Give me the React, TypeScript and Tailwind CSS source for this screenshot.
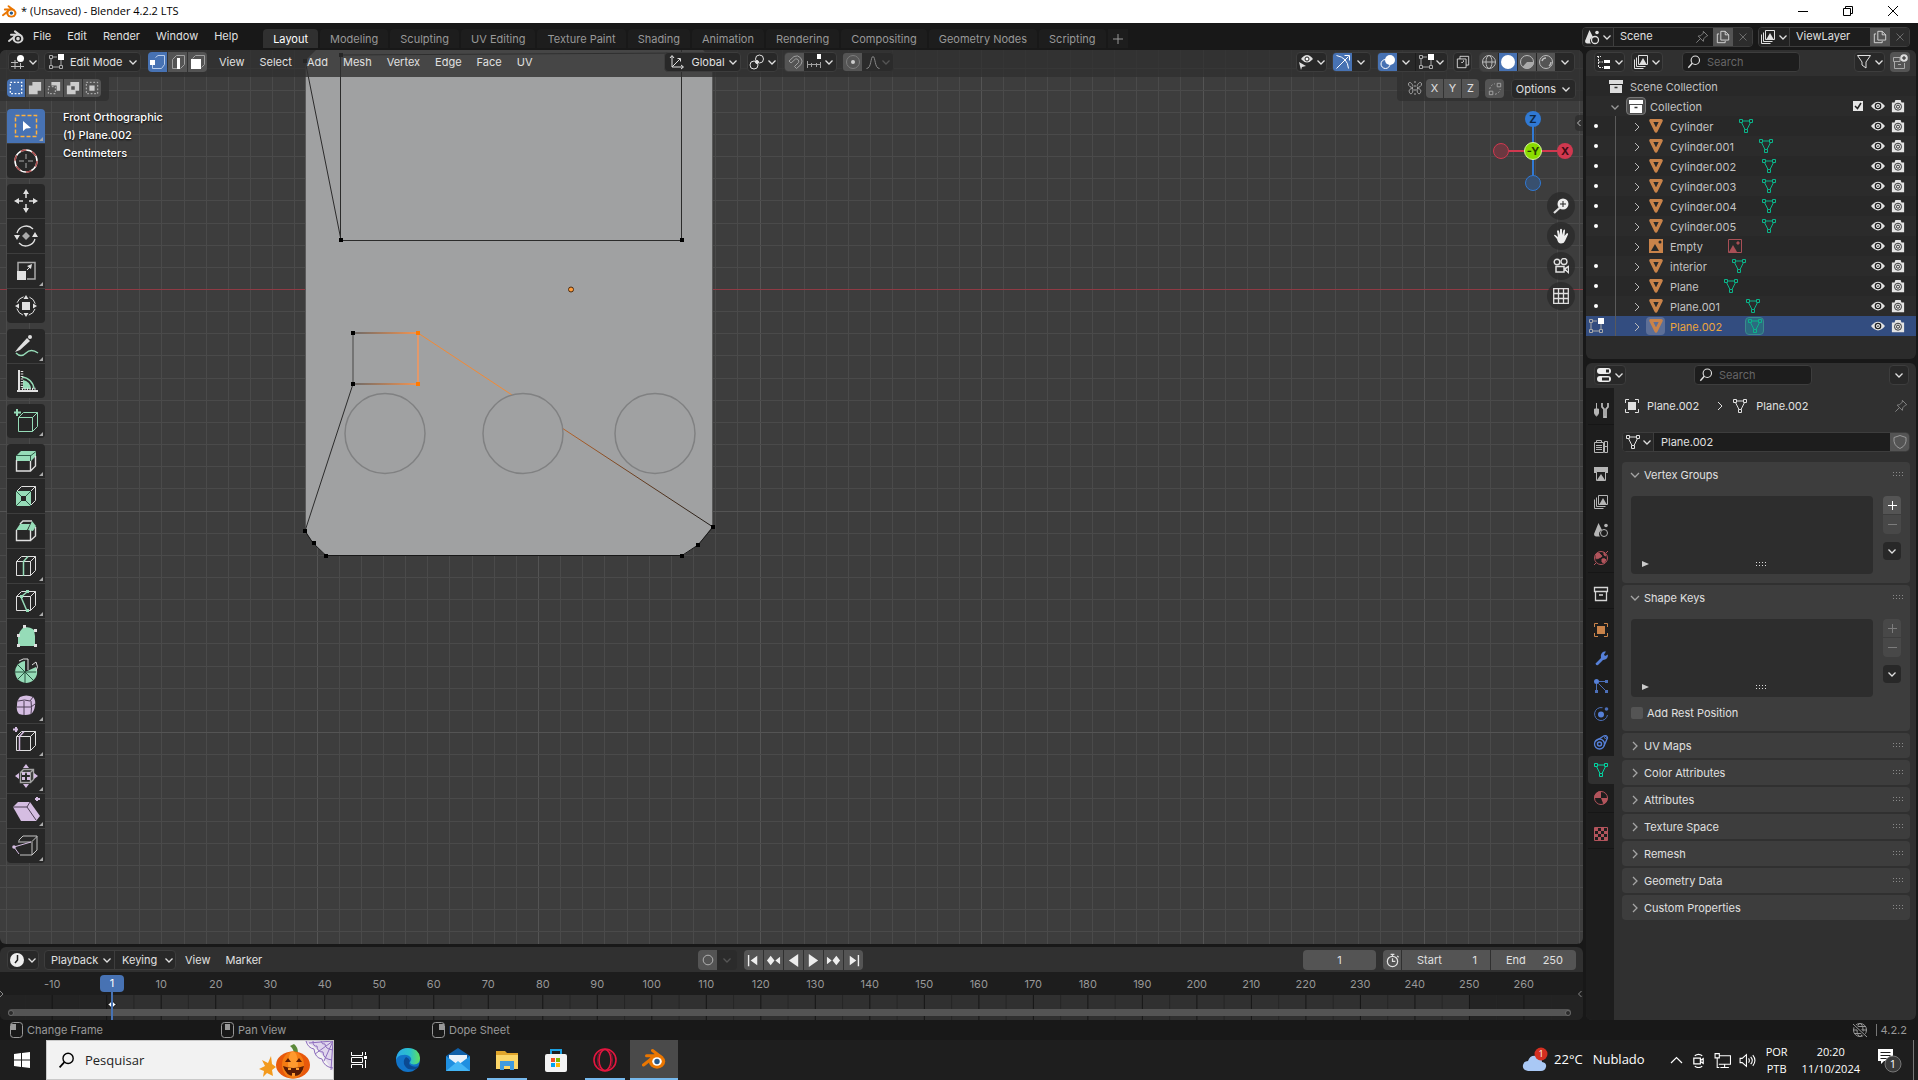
import { Fragment, ReactNode, useState } from 'react';

interface IconProps {
  children: ReactNode;
  size?: number;
  box?: number;
  className?: string;
}

function Svg({ children, size = 16, box = 16, className = '' }: IconProps) {
  return (
    <svg
      width={size}
      height={size}
      viewBox={`0 0 ${box} ${box}`}
      fill="none"
      stroke="currentColor"
      className={`shrink-0 ${className}`}
      aria-hidden="true"
    >
      {children}
    </svg>
  );
}

/* ---------- shared icons ---------- */

const Chevron = ({ className = '' }: { className?: string }) => (
  <Svg size={10} box={10} className={className}>
    <path d="M1.500 3.500 5 7l3.500-3.500" strokeWidth="1.300" />
  </Svg>
);

const BlenderLogo = ({ size = 16, ring = '#ea7600', hole = '#fff', dot = '#265787' }) => (
  <Svg size={size} box={24}>
    <path d="M1.500 18 11 10.500M4.500 8.800h10M10.500 3.500 19 10" stroke={ring} strokeWidth="3" strokeLinecap="round" />
    <ellipse cx="15" cy="14.500" rx="8.200" ry="7.200" fill={ring} stroke="none" />
    <ellipse cx="15" cy="14.500" rx="4.800" ry="4.200" fill={hole} stroke="none" />
    <circle cx="15" cy="14.500" r="2.700" fill={dot} stroke="none" />
  </Svg>
);

const MeshData = ({ className = '', size = 16 }: { className?: string; size?: number }) => (
  <Svg size={size} className={className}>
    <path d="M1.500 1.500h3v3h-3zM11.500 1.500h3v3h-3zM6.500 11.500h3v3h-3zM4.500 3h7M3.500 4.500l3.500 7M12.500 4.500 9 11.500" />
  </Svg>
);

const MeshObject = ({ className = '' }: { className?: string }) => (
  <Svg className={className}>
    <path d="M2.800 2.500h10.400L8 13z" strokeWidth="3.200" strokeLinejoin="round" />
  </Svg>
);

const Magnifier = ({ size = 14 }: { size?: number }) => (
  <Svg size={size}>
    <circle cx="9.500" cy="6" r="4.800" strokeWidth="1.300" />
    <path d="M6 9.500 1.500 14.500" strokeWidth="1.600" />
  </Svg>
);

const ArchiveBox = ({ className = '' }: { className?: string }) => (
  <Svg className={className}>
    <path d="M1 2h14v4H1zM2 7h12v8H2z" fill="currentColor" stroke="none" />
    <path d="M6.500 9.500h3" stroke="#333" strokeWidth="1.600" />
  </Svg>
);

const ImageStack = ({ className = '' }: { className?: string }) => (
  <Svg className={className}>
    <path d="M5.500 1.500h9v9h-9zM3.500 3.500v9h9M1.500 5.500v9h9" />
    <path d="M6.500 10 10 4l3.500 6z" fill="currentColor" stroke="none" />
  </Svg>
);

const SceneIcon = ({ className = '' }: { className?: string }) => (
  <Svg className={className}>
    <path d="M5.500 1 9 8a4 4 0 0 0-2 6.500H3A2.500 2.500 0 0 1 1 12z" fill="currentColor" stroke="none" />
    <circle cx="11" cy="11" r="3.500" strokeWidth="1.300" />
    <circle cx="13" cy="3.500" r="1.800" fill="currentColor" stroke="none" />
  </Svg>
);

const Pin = () => (
  <Svg size={14} className="text-[#8a8a8a]">
    <path d="m9.500 1.500 5 5-1.500.5-3 3-.5 3-6-6 3-.5 3-3zM6 10l-4.500 4.500" />
  </Svg>
);

const EditVerts = ({ className = '' }: { className?: string }) => (
  <Svg className={className}>
    <path d="M1.500 1.500h3v3h-3zM1.500 11.500h3v3h-3zM11.500 11.500h3v3h-3zM3 4.500v7M4.500 13h7M13 6v5.500M4.500 3H9" stroke="#a9a9a9" />
    <path d="M10 0h6v6h-6z" fill="#fff" stroke="none" />
  </Svg>
);

const Copy = () => (
  <Svg size={14}>
    <path d="M5.500 1.500h5l4 4v6h-9zM10.500 1.500v4h4M3.500 4.500h-2v10h9v-2" />
  </Svg>
);

const Cross = () => (
  <Svg size={10} box={10} className="text-[#6b6b6b]">
    <path d="m1.500 1.500 7 7M8.500 1.500l-7 7" />
  </Svg>
);

const Eye = () => (
  <Svg size={14}>
    <path d="M0 8q8-10 16 0-8 10-16 0z" fill="#e3e3e3" stroke="none" />
    <circle cx="8" cy="8" r="3" fill="#fff" stroke="#222" strokeWidth="1.600" />
    <circle cx="8" cy="8" r="1" fill="#222" stroke="none" />
  </Svg>
);

const Camera = () => (
  <Svg size={14}>
    <path d="M1 4h3l1-3h6l1 3h3v11H1z" fill="#e3e3e3" stroke="none" />
    <circle cx="8" cy="8.800" r="4" stroke="#222" />
    <circle cx="8" cy="8.800" r="1.800" stroke="#222" />
  </Svg>
);

const Grip = ({ className = '' }: { className?: string }) => (
  <svg width="11" height="5" className={`shrink-0 ${className}`} aria-hidden="true">
    <path d="M0 .5h11M0 3.500h11" stroke="currentColor" strokeDasharray="1 2" />
  </svg>
);

/* ---------- title + menu bar ---------- */

function TitleBar() {
  return (
    <div className="flex h-[23px] items-center bg-white pr-[3px] pl-0.5 font-['Open_Sans',sans-serif] text-[11px] text-black">
      <BlenderLogo size={15} />
      <span className="ml-1">* (Unsaved) - Blender 4.2.2 LTS</span>
      <div className="ml-auto flex h-[21px] self-start text-black">
        <button aria-label="Minimize" className="flex w-[45px] items-center justify-center">
          <Svg size={10} box={10}><path d="M0 5.500h10" /></Svg>
        </button>
        <button aria-label="Restore" className="flex w-[45px] items-center justify-center">
          <Svg size={10} box={10}><path d="M.5 2.500h7v7h-7zM2.500 2.500v-2h7v7h-2" /></Svg>
        </button>
        <button aria-label="Close" className="flex w-[45px] items-center justify-center">
          <Svg size={10} box={10}><path d="m0 0 10 10M10 0 0 10" /></Svg>
        </button>
      </div>
    </div>
  );
}

const workspaces = [
  'Layout', 'Modeling', 'Sculpting', 'UV Editing', 'Texture Paint', 'Shading',
  'Animation', 'Rendering', 'Compositing', 'Geometry Nodes', 'Scripting',
];

function IdField({ name, icon, pin, width }: { name: string; icon: ReactNode; pin?: boolean; width: string }) {
  return (
    <div className={`flex h-5 items-stretch overflow-hidden rounded border border-[#3d3d3d] bg-[#1d1d1d] ${width}`}>
      <button aria-label={`Browse ${name}`} className="flex w-[31px] shrink-0 items-center justify-center gap-0.5 border-r border-[#3d3d3d] bg-[#222]">
        {icon}
        <Chevron />
      </button>
      <input aria-label={name} defaultValue={name} className="w-0 min-w-0 flex-1 bg-transparent pl-1.5 outline-none" />
      {pin && <span className="mr-1 flex items-center"><Pin /></span>}
      <button aria-label={`New ${name}`} className="flex w-5 items-center justify-center bg-[#545454]"><Copy /></button>
      <button aria-label={`Remove ${name}`} className="flex w-[19px] items-center justify-center bg-[#2c2c2c]"><Cross /></button>
    </div>
  );
}

function MenuBar() {
  const [active, setActive] = useState('Layout');
  return (
    <div className="flex h-[27px] items-center bg-[#181818] pl-2">
      <BlenderLogo ring="#d5d5d5" hole="#181818" dot="#d5d5d5" />
      <nav className="ml-[9px] flex gap-4">
        {['File', 'Edit', 'Render', 'Window', 'Help'].map((m) => (
          <button key={m}>{m}</button>
        ))}
      </nav>
      <div className="ml-[25px] flex gap-0.5 self-start pt-1.5">
        {workspaces.map((w) => (
          <button
            key={w}
            onClick={() => setActive(w)}
            className={
              w === active
                ? 'h-[19px] rounded-t bg-[#303030] px-2.5 pt-0.5 text-white'
                : 'h-[19px] rounded-t bg-[#1d1d1d] px-2.5 pt-0.5 text-[#989898]'
            }
          >
            {w}
          </button>
        ))}
        <button aria-label="Add workspace" className="flex h-[19px] w-5 items-center justify-center bg-[#1d1d1d] text-[#989898]">
          <Svg size={10} box={10}><path d="M5 0v10M0 5h10" /></Svg>
        </button>
      </div>
      <div className="mr-2 ml-auto flex gap-[5px]">
        <IdField name="Scene" icon={<SceneIcon />} pin width="w-[171px]" />
        <IdField name="ViewLayer" icon={<ImageStack />} width="w-[152px]" />
      </div>
    </div>
  );
}

/* ---------- 3D viewport ---------- */

const columns = Array.from({ length: 180 }, (_, i) => i);

function Canvas() {
  const origin = 95;
  const step = 22.15;
  return (
    <svg className="absolute inset-0 h-full w-full bg-[#3d3d3d]" aria-label="Mesh in front orthographic view">
      <defs>
        <linearGradient id="edgeFade" x1="0" x2="1">
          <stop offset="0" stopColor="#6c6a69" />
          <stop offset="1" stopColor="#f49552" />
        </linearGradient>
        <linearGradient id="longEdge" x1="0" x2="1">
          <stop offset="0" stopColor="#b8642a" />
          <stop offset="1" stopColor="#1c1a18" />
        </linearGradient>
      </defs>
      {columns.map((i) => {
        const x = Math.round(origin + (i - 4) * step) + 0.5;
        return <path key={i} d={`M${x} 0V3000`} stroke={(i - 4) % 10 === 0 ? '#545454' : '#4a4a4a'} />;
      })}
      {columns.map((i) => {
        const y = Math.round(239 + (i - 10) * step) + 0.5;
        return <path key={i} d={`M0 ${y}H4000`} stroke={(i - 10) % 10 === 0 ? '#545454' : '#4a4a4a'} />;
      })}
      <path d="M0 239.500H4000" stroke="#8f3a44" />

      <path d="M316 0H703L712 10V477L698 495 682 506H326L313 493 306 482V10z" fill="#a0a1a2" />
      <path d="M712.500 12V477M305.500 12V482" stroke="#5a5a5a" />
      <path d="M305 481 313 493 326 505.500H682L698 495 713 477" stroke="#181818" fill="none" />
      <path d="M341 5 682 3M340.500 5V190.500H681.500V0M305 10 341 190M353 334 305 481" stroke="#2b2b2b" fill="none" />
      <path d="M353 283V334" stroke="#747474" strokeWidth="2" />
      <path d="M353 282h65v2h-65zM353 333h65v2h-65z" fill="url(#edgeFade)" />
      <path d="M418 283V334" stroke="#e2996c" strokeWidth="2" />
      <path d="m418 283 94 62" stroke="#f28a35" />
      <path d="m562 378 151 99" stroke="url(#longEdge)" />
      {[385, 523, 655].map((cx) => (
        <circle key={cx} cx={cx} cy="383.500" r="40" fill="none" stroke="#808182" strokeWidth="1.500" />
      ))}
      {[[341, 5], [305, 11], [341, 190], [682, 190], [353, 283], [353, 334], [305, 481], [314, 493], [326, 506], [682, 506], [698, 495], [713, 477]].map(([x, y]) => (
        <rect key={`${x}-${y}`} x={x - 2} y={y - 2} width="4" height="4" fill="#000" />
      ))}
      <rect x="416" y="281" width="4" height="4" fill="#ff7a00" />
      <rect x="416" y="332" width="4" height="4" fill="#ff7a00" />
      <circle cx="571" cy="239.500" r="2.500" fill="#ff9d3c" stroke="#4a2a10" />
    </svg>
  );
}

const dropdown = 'flex h-5 items-center justify-center gap-0.5 rounded border border-[#3d3d3d] bg-[#282828]';
const grayCell = 'flex w-[19px] items-center justify-center bg-[#545454]';
const blueCell = 'flex w-[19px] items-center justify-center bg-[#4772b3] text-white';

const selectModes = [
  <path key="v" d="M5.500 3.500 8 1.500h6.500v9l-3 4h-9v-5" stroke="#b9cdeb" />,
  <path key="e" d="M2.500 14.500v-9l4-4h8v9l-4 4M2.500 14.500h5" stroke="#a0a0a0" />,
  <path key="f" d="M2.500 4.500l3-3h9v9l-3 3" stroke="#a0a0a0" />,
];

function ViewportHeader() {
  const [mode, setMode] = useState(0);
  return (
    <div className="flex h-[27px] shrink-0 items-start bg-[#303030]/80 pt-0.5 pr-2 pl-2">
      <button aria-label="Editor type" className={`${dropdown} w-[31px]`}>
        <Svg><path d="M5 6v9M1 8.500h7M1 12.500h13M10.500 9v6" stroke="#bbb" /><circle cx="10.500" cy="4.500" r="3.500" fill="#fff" stroke="none" /></Svg>
        <Chevron />
      </button>
      <div className={`${dropdown} relative ml-[5px] w-[97px] pl-[3px]`}>
        <EditVerts />
        <select aria-label="Interaction mode" className="h-full w-full appearance-none bg-transparent pl-1 outline-none">
          <option>Edit Mode</option>
          <option>Object Mode</option>
          <option>Sculpt Mode</option>
        </select>
        <Chevron className="pointer-events-none absolute right-0.5" />
      </div>
      <div className="ml-[7px] flex h-5 gap-px overflow-hidden rounded">
        {selectModes.map((m, i) => (
          <button key={i} aria-label={['Vertex', 'Edge', 'Face'][i] + ' select'} onClick={() => setMode(i)} className={i === mode ? blueCell : grayCell}>
            <Svg>
              {m}
              {i === 0 && <path d="M0 6h5v5H0z" fill="#fff" stroke="none" />}
              {i === 1 && <path d="M7 4h3v11H7z" fill="#fff" stroke="none" />}
              {i === 2 && <path d="M1 5h10v10H1z" fill="#fff" stroke="none" />}
            </Svg>
          </button>
        ))}
      </div>
      <nav className="ml-3 flex h-5 gap-[15px]">
        {['View', 'Select', 'Add', 'Mesh', 'Vertex', 'Edge', 'Face', 'UV'].map((m) => (
          <button key={m}>{m}</button>
        ))}
      </nav>

      <div className={`${dropdown} relative ml-[132px] w-[77px] pl-1`}>
        <Svg><path d="M3 13V2M3 13h11M3 13 11 5M1 4l2-2.500L5 4M12 11l2.500 2-2.500 2M8.500 4.500h3v3" /></Svg>
        <select aria-label="Transform orientation" className="h-full w-full appearance-none bg-transparent pl-1 outline-none">
          <option>Global</option>
          <option>Local</option>
        </select>
        <Chevron className="pointer-events-none absolute right-0.5" />
      </div>
      <button aria-label="Pivot point" className={`${dropdown} ml-1.5 w-[31px]`}>
        <Svg><circle cx="10.500" cy="5" r="4" /><circle cx="5" cy="11" r="4" /><circle cx="8" cy="8" r="1.500" fill="currentColor" /></Svg>
        <Chevron />
      </button>
      <div className="ml-1.5 flex h-5 overflow-hidden rounded border border-[#3d3d3d] bg-[#282828]">
        <button aria-label="Snap" className={grayCell}>
          <Svg className="text-[#a0a0a0]"><path d="M2 7 7 2.500a5.500 5.500 0 0 1 7 8L9.500 14.500l-2-2 4-4a2.500 2.500 0 0 0-3-3.500L4 9z" /></Svg>
        </button>
        <button aria-label="Snap target" className="flex w-8 items-center justify-center gap-0.5">
          <Svg><path d="M1.500 7v7M14.500 8v6M1.500 10.500h13M5.500 9v4M10.500 9v4" stroke="#a0a0a0" /><path d="M11 0h4v5h-4z" fill="#fff" stroke="none" /></Svg>
          <Chevron />
        </button>
      </div>
      <div className="ml-[5px] flex h-5 overflow-hidden rounded border border-[#333] bg-[#2b2b2b]">
        <button aria-label="Proportional editing" className={grayCell}>
          <Svg className="text-[#7c7c7c]"><circle cx="8" cy="8" r="6.500" /><circle cx="8" cy="8" r="2" fill="#ccc" stroke="none" /></Svg>
        </button>
        <button aria-label="Falloff" className="flex w-[31px] items-center justify-center text-[#888]">
          <Svg><path d="M1.500 14.500c5 0 4-12 6.500-12s1.500 12 6.500 12" /></Svg>
          <Chevron className="text-[#555]" />
        </button>
      </div>

      <button aria-label="Object types visibility" className={`${dropdown} ml-auto w-[31px]`}>
        <Svg><path d="M3 5q6-8 12 0-6 7-12 0z" fill="#ddd" stroke="none" /><circle cx="9" cy="5" r="2" fill="#fff" stroke="#222" /><path d="m1 8 7 4-4 1-1 3z" fill="#ddd" stroke="none" /></Svg>
        <Chevron />
      </button>
      <div className="ml-[5px] flex h-5 overflow-hidden rounded border border-[#3d3d3d] bg-[#282828]">
        <button aria-label="Gizmos" className={blueCell}>
          <Svg><path d="M1.500 1.500q11 2 12 13M1.500 14.500l12-12M9.500 1.500h5v5" /></Svg>
        </button>
        <button aria-label="Gizmo options" className="flex w-[18px] items-center justify-center"><Chevron /></button>
      </div>
      <div className="ml-1.5 flex h-5 overflow-hidden rounded border border-[#3d3d3d] bg-[#282828]">
        <button aria-label="Overlays" className={blueCell}>
          <Svg><circle cx="5.500" cy="10" r="4.500" /><circle cx="10" cy="6" r="5" fill="#fff" stroke="none" /></Svg>
        </button>
        <button aria-label="Overlay options" className="flex w-[19px] items-center justify-center border-r border-[#1d1d1d]"><Chevron /></button>
        <button aria-label="Edit mode overlays" className="flex w-[31px] items-center justify-center gap-px"><EditVerts /><Chevron /></button>
      </div>
      <button aria-label="X-ray" className={`${dropdown} ml-[5px] w-[19px]`}>
        <Svg size={14}><path d="M1.500 4.500h10v10h-10zM4.500 1.500h10v10h-3M4.500 1.500v3" /><path d="M6 8.500h2M8.500 6v3" strokeDasharray="2 1" /></Svg>
      </button>
      <div className="ml-[7px] flex h-5 gap-px overflow-hidden rounded border border-[#3d3d3d] bg-[#282828]">
        <button aria-label="Wireframe" className="flex w-[18px] items-center justify-center bg-[#424242] text-[#bbb]">
          <Svg><circle cx="8" cy="8" r="6.500" /><ellipse cx="8" cy="8" rx="3" ry="6.500" /><path d="M1.500 8h13" /></Svg>
        </button>
        <button aria-label="Solid" className="flex w-[18px] items-center justify-center bg-[#4772b3]">
          <Svg><circle cx="8" cy="8" r="7" fill="#fff" stroke="none" /></Svg>
        </button>
        <button aria-label="Material preview" className="flex w-[18px] items-center justify-center bg-[#545454] text-[#bbb]">
          <Svg><circle cx="8" cy="8" r="6.500" /><path d="M8 1v7h7a7 7 0 0 1-11.500 5L8 8z" fill="#aaa" stroke="none" /></Svg>
        </button>
        <button aria-label="Rendered" className="flex w-[18px] items-center justify-center bg-[#545454] text-[#bbb]">
          <Svg><circle cx="8" cy="8" r="6.500" /><path d="M4 7a4 4 0 0 1 4-3M11 12a5 5 0 0 0 2-4" strokeWidth="1.500" /></Svg>
        </button>
        <button aria-label="Shading options" className="flex w-[18px] items-center justify-center"><Chevron /></button>
      </div>
    </div>
  );
}

const selectTools = [
  <path key="0" d="M1.500 1.500h13v13h-13z" strokeDasharray="2 2" strokeWidth="1.500" stroke="#fff" />,
  <path key="1" d="M5 1h10v10h-4v4H1V5h4z" fill="#ccc" stroke="none" />,
  <Fragment key="2"><path d="M5 1h10v10h-4V5H5z" fill="#ccc" stroke="none" /><path d="M1.500 6.500h8v8h-8z" strokeDasharray="2 2" /></Fragment>,
  <path key="3" d="M5 1h10v10h-4v4H1V5h4zM6 6v4h4V6z" fill="#ccc" stroke="none" fillRule="evenodd" />,
  <Fragment key="4"><path d="M5 5h6v6H5z" fill="#ccc" stroke="none" /><path d="M1.500 1.500h13v13h-13z" strokeDasharray="2 2" /></Fragment>,
];

function ToolSettings() {
  return (
    <div className="flex h-6 shrink-0 justify-between">
      <div className="flex items-start rounded-br bg-[#303030]/80 pt-0.5 pr-2 pl-[7px]">
        <div className="flex h-[18px] gap-px overflow-hidden rounded text-[#ccc]">
          {selectTools.map((t, i) => (
            <button key={i} aria-label={`Selection mode ${i + 1}`} className={`flex w-[18px] items-center justify-center ${i === 0 ? 'bg-[#4772b3]' : 'bg-[#545454]'}`}>
              <Svg size={14}>{t}</Svg>
            </button>
          ))}
        </div>
      </div>
      <div className="flex items-start rounded-bl bg-[#303030]/80 pt-0.5 pr-[7px] pl-[10px]">
        <Svg className="mt-px text-[#aaa]">
          <path d="M8 1v14" strokeDasharray="2 2" />
          <path d="M6 6.500C5 2 1.500 1.500 1.500 4S4 7.500 6 7.500M6 8.500C3 8.500 1.500 10 2.500 12.500S6 14 6 9M10 6.500c1-4.500 4.500-5 4.500-2.500S12 7.500 10 7.500M10 8.500c3 0 4.500 1.500 3.500 4S10 14 10 9" />
        </Svg>
        <div className="ml-[3px] flex h-[19px] gap-px overflow-hidden rounded">
          {['X', 'Y', 'Z'].map((a) => (
            <button key={a} className="w-[17px] bg-[#545454]">{a}</button>
          ))}
        </div>
        <button aria-label="Auto merge" className="ml-1.5 flex h-[19px] w-[19px] items-center justify-center rounded bg-[#545454] text-[#aaa]">
          <Svg size={14}><path d="M1.500 10.500h4v4h-4zM10.500 1.500h4v4h-4z" /><path d="M2 8q1-5 6-6M8 14q5-1 6-6" strokeDasharray="2 2" /></Svg>
        </button>
        <button className={`${dropdown} ml-[7px] w-[65px] gap-[5px]`}>Options<Chevron /></button>
      </div>
    </div>
  );
}

const cube = 'M2.500 7.500h14v14h-14zM2.500 7.500l5-5h14l-5 5M21.500 2.500v14l-5 5';
const green = '#96dcb8';
const violet = '#d5bde2';

interface Tool {
  name: string;
  more?: boolean;
  icon: ReactNode;
}

const toolGroups: Tool[][] = [
  [
    {
      name: 'Select Box', more: true,
      icon: <><path d="M1.500 1.500h21v21h-21z" stroke="#ffb13d" strokeWidth="1.500" strokeDasharray="4 2" /><path d="m9 7 8 7-5 .5L9 17z" fill="#fff" stroke="none" /></>,
    },
    {
      name: 'Cursor',
      icon: <><circle cx="12" cy="12" r="11" stroke="#fff" strokeWidth="1.500" /><circle cx="12" cy="12" r="11" stroke="#a84848" strokeWidth="1.500" strokeDasharray="5.760 5.760" /><path d="M12 5v5M12 14v5M5 12h5M14 12h5" stroke="#aaa" /></>,
    },
  ],
  [
    {
      name: 'Move',
      icon: <><path d="M12 4v5M12 15v5M4 12h5M15 12h5" strokeWidth="1.500" /><path d="m12 0 3 5H9zM12 24l3-5H9zM0 12l5-3v6zM24 12l-5-3v6z" fill="currentColor" stroke="none" /></>,
    },
    {
      name: 'Rotate',
      icon: <><path d="M3 9A9.500 9.500 0 0 1 19 5M21 15A9.500 9.500 0 0 1 5 19" strokeWidth="1.300" /><path d="M0 11h6l-3 5zM18 13h6l-3-5z" fill="currentColor" stroke="none" /><path d="m12 8 4 4-4 4-4-4z" fill="#aaa" stroke="none" /></>,
    },
    {
      name: 'Scale', more: true,
      icon: <><path d="M4 12V3.500h17V20h-8" stroke="#aaa" strokeWidth="1.500" /><path d="M3 12h9v9H3zM13 7l5-2-1 5z" fill="currentColor" stroke="none" /><path d="m13 11 4-4" /></>,
    },
    {
      name: 'Transform',
      icon: <><circle cx="12" cy="12" r="9.500" strokeDasharray="9 6" strokeDashoffset="-3" /><path d="M8 8h8v8H8zM12 1l2.500 4h-5zM12 23l2.500-4h-5zM1 12l4-2.500v5zM23 12l-4-2.500v5z" fill="currentColor" stroke="none" /></>,
    },
  ],
  [
    {
      name: 'Annotate', more: true,
      icon: <><path d="M2 19q5 5 10 0t12 0" stroke={green} strokeWidth="1.500" /><path d="m4 14 9-10 3 3-10 9-5 2z" fill="currentColor" stroke="none" /><circle cx="16" cy="3" r="2" fill="currentColor" stroke="none" /></>,
    },
    {
      name: 'Measure',
      icon: <><path d="M8 8a13 13 0 0 1 12 12" stroke={green} strokeWidth="1.500" /><path d="M9 11a9 9 0 0 1 8 9H9z" fill={green} stroke="none" /><path d="M5 1v22M3 22h21" strokeWidth="2" /><path d="M8 2v18M8 20h15" strokeWidth="2.500" strokeDasharray="1 1.500" /></>,
    },
  ],
  [
    {
      name: 'Add Cube', more: true,
      icon: <><path d={cube} stroke={green} transform="translate(2 1)" /><path d="M3 0v7M0 3.500h7" stroke={green} strokeWidth="2" /></>,
    },
  ],
  [
    {
      name: 'Extrude Region', more: true,
      icon: <><path d="M2 12V7l5-5h15v5l-5 5z" fill={green} stroke="none" /><path d="M2.500 11v11h14V11M21.500 7v10l-5 5" strokeWidth="1.400" /><path d="M2 6.500h15l5-4M16.500 6v6" stroke="#2f5c48" /></>,
    },
    {
      name: 'Inset Faces',
      icon: <><path d={cube} /><path d="M2 7h15v15H2zM7 12v5h5v-5z" fill={green} stroke="none" fillRule="evenodd" /><path d="m2 7 5 5M17 7l-5 5M2 22l5-5M17 22l-5-5" stroke="#2f5c48" /></>,
    },
    {
      name: 'Bevel',
      icon: <><path d="m6 5 3-3h9M2.500 11v10.500h14V11M21.500 8v9l-5 4.500" strokeWidth="1.400" /><path d="m2 11 4-6h10l-3 6zM14 11l4-9 4 5-3 5z" fill={green} stroke="none" /></>,
    },
    {
      name: 'Loop Cut', more: true,
      icon: <><path d={cube} /><path d="M9.500 22V7.500L14 2.500" stroke={green} strokeWidth="1.500" /></>,
    },
    {
      name: 'Knife', more: true,
      icon: <><path d={cube} /><path d="m13 3-6 5 6 14" stroke={green} strokeWidth="1.500" /><path d="M12 1h3v3h-3zM6 6h3v3H6zM12 20h3v3h-3z" fill={green} stroke="none" /></>,
    },
    {
      name: 'Poly Build',
      icon: <><path d="M10 3q7 0 10 3l1 6v10H4V12q2-6 6-9z" fill={green} stroke="none" /><path d="M9 1h3v3H9zM20 5h3v3h-3zM3 10h3v3H3zM3 20h3v3H3zM20 20h3v3h-3z" fill="currentColor" stroke="none" /></>,
    },
    {
      name: 'Spin',
      icon: <><path d="M11 13V2A11 11 0 1 0 22 8z" fill={green} stroke="none" /><path d="M11 13v11M11 13H0M11 13l-8-8M11 13l8 8M11 13l-8 8M11 13h11" stroke="#2a5441" /><path d="M5 2q4-3 9-2v11M18 6l4-3q3 5 0 9" /></>,
    },
    {
      name: 'Smooth', more: true,
      icon: <><path d="M6 3q6-3 13 0 3 3 2 9t-4 8q-6 2-12 0-3-3-2-9 0-5 3-8z" fill={violet} stroke="none" /><path d="M3 13h14l4-3M10 21V7M4 7q7-2 12 0l3-4M17 7q1 7 0 13" stroke="#4c3e54" /></>,
    },
    {
      name: 'Edge Slide', more: true,
      icon: <><path d={cube} /><path d="M5.500 22V7.500L10 2.500" stroke={violet} strokeWidth="1.500" /><path d="M2-2v5M-1 .5h5" stroke={violet} strokeWidth="2" /></>,
    },
    {
      name: 'Shrink/Fatten', more: true,
      icon: <><path d="M6.500 8.500h10v10h-10zM6.500 8.500l3-3h10v10l-3 3M16.500 8.500l3-3" stroke="#a5a5a5" strokeWidth="1.400" /><path d="m12 0 3 4H9zM12 24l3-4H9zM1 12l4-3v6zM24 12l-4-3v6zM8 8h3v3H8zM13 8h3v3h-3zM8 13h3v3H8zM13 13h3v3h-3z" fill={violet} stroke="none" /></>,
    },
    {
      name: 'Shear', more: true,
      icon: <><path d="m-1 8 5-5h12l10 14-4 5H7z" fill={violet} stroke="none" /><path d="M-1 8h14L16 3M13 8l9 13" stroke="#4c3e54" /><path d="M23-2v4M21 0h5" stroke={violet} strokeWidth="2" /></>,
    },
    {
      name: 'Rip Region', more: true,
      icon: <><path d="M5 7.500V6l4-4h14v14l-5 5H6M18 7.500V21M18 7.500l5-5M4 8h13" stroke="#c4c4c4" /><path d="m17 8-17 5 5 7" stroke={violet} /><circle cx="0" cy="13" r="1.800" fill={violet} stroke="none" /></>,
    },
  ],
];

function Toolbar() {
  const [active, setActive] = useState('Select Box');
  return (
    <div className="flex w-[38px] flex-col gap-1.5">
      {toolGroups.map((group, g) => (
        <div key={g} className="flex flex-col gap-px overflow-hidden rounded bg-[#3d3d3d]">
          {group.map((t) => (
            <button
              key={t.name}
              aria-label={t.name}
              onClick={() => setActive(t.name)}
              className={`relative flex h-[34px] items-center justify-center ${t.name === active ? 'bg-[#4772b3]' : 'bg-[#272727]'}`}
            >
              <Svg size={24} box={24} className="overflow-visible">{t.icon}</Svg>
              {t.more && (
                <svg width="4" height="4" className="absolute right-0.5 bottom-0.5"><path d="M4 0v4H0z" fill="#aaa" /></svg>
              )}
            </button>
          ))}
        </div>
      ))}
    </div>
  );
}

function NavGizmo() {
  return (
    <svg width="82" height="82" viewBox="0 0 82 82" className="mr-px font-['Inter',sans-serif] text-[11px] font-bold" aria-label="Navigation gizmo">
      <path d="M41 9v64" stroke="#3079d4" strokeWidth="2" />
      <path d="M9 41h64" stroke="#d0384f" strokeWidth="2" />
      <circle cx="9" cy="41" r="7.500" fill="#6b3840" stroke="#d0384f" />
      <circle cx="41" cy="73" r="7.500" fill="#38506f" stroke="#3079d4" />
      <circle cx="41" cy="9" r="8" fill="#3079d4" />
      <circle cx="73" cy="41" r="8" fill="#d0384f" />
      <circle cx="41" cy="41" r="8.500" fill="#8bdc00" stroke="#d5f59b" />
      <text x="41" y="13" textAnchor="middle" fill="#0d2746">Z</text>
      <text x="73" y="45" textAnchor="middle" fill="#3f0b14">X</text>
      <text x="41" y="45" textAnchor="middle" fill="#263d00">-Y</text>
    </svg>
  );
}

const navButtons = [
  { name: 'Zoom', icon: <><circle cx="10" cy="6" r="5.500" fill="#eee" stroke="none" /><path d="M7 9.500 1 15" strokeWidth="2.200" /><path d="M10 3v6M7 6h6" stroke="#222" /></> },
  { name: 'Pan', icon: <path d="M4 11 1 7.500q.5-1.500 2 0L5 9 4 3q1-1.500 2 0l1 4V1.500q1-1.500 2 0V7l1.500-5q1.500-1 1.500.5L11.500 8 14 5q1.500 0 1 1.500L12 13q-1 2.500-4 2.500T4 11z" fill="#eee" stroke="none" /> },
  { name: 'Camera view', icon: <><circle cx="4" cy="4" r="2.800" strokeWidth="1.400" /><circle cx="11" cy="3.500" r="3" strokeWidth="1.400" /><path d="M3 8.500h8v5.500H3zM11.500 11l4-2.500v6z" strokeWidth="1.500" /></> },
  { name: 'Switch projection', icon: <path d="M.7.700h14.600v14.600H.700zM5.500.700v14.600M10.500.700v14.600M.700 5.500h14.600M.700 10.500h14.600" strokeWidth="1.300" /> },
];

function Viewport() {
  return (
    <section className="relative flex min-h-0 flex-1 flex-col overflow-hidden rounded-md">
      <Canvas />
      <div className="relative flex flex-1 flex-col">
        <ViewportHeader />
        <ToolSettings />
        <div className="flex flex-1 items-start pt-2 pl-[7px]">
          <Toolbar />
          <div className="-mt-px ml-[18px] text-[11px] leading-[18px] font-medium text-white [text-shadow:0_1px_2px_#000]">
            <p>Front Orthographic</p>
            <p>(1) Plane.002</p>
            <p>Centimeters</p>
          </div>
          <div className="ml-auto flex flex-col items-end pt-px pr-2">
            <NavGizmo />
            <div className="flex flex-col gap-0.5">
              {navButtons.map((b) => (
                <button key={b.name} aria-label={b.name} className="flex h-7 w-7 items-center justify-center rounded-full bg-[#2b2b2b]/80">
                  <Svg>{b.icon}</Svg>
                </button>
              ))}
            </div>
          </div>
        </div>
      </div>
      <button aria-label="Show sidebar" className="absolute top-[65px] right-0 flex h-4 w-2 items-center justify-center rounded-l bg-[#2b2b2b]/70">
        <Svg size={8} box={8}><path d="M5.500 1 2.500 4l3 3" stroke="#bbb" /></Svg>
      </button>
    </section>
  );
}

/* ---------- timeline ---------- */

const frames = Array.from({ length: 28 }, (_, i) => (i - 1) * 10);
const ticks = Array.from({ length: 57 }, (_, i) => (i - 3) * 5);
const frameX = (f: number) => ((106.7 + f * 5.451) / 1583) * 100;

const transport = [
  { name: 'Jump to start', d: 'M2 2h1.500v12H2zM12 3v10L5 8z' },
  { name: 'Previous keyframe', d: 'm5 3 4 5-4 5-4-5zM15 4v8l-5-4z' },
  { name: 'Play reverse', d: 'M13 1v14L3 8z' },
  { name: 'Play', d: 'M3 1v14l10-7z' },
  { name: 'Next keyframe', d: 'm11 3 4 5-4 5-4-5zM1 4v8l5-4z' },
  { name: 'Jump to end', d: 'M12.500 2H14v12h-1.500zM4 3v10l7-5z' },
];

function Timeline() {
  return (
    <section className="mt-[3px] flex h-[73px] shrink-0 flex-col overflow-hidden rounded-md bg-[#303030]">
      <div className="flex h-[25px] shrink-0 items-start pt-[3px] pr-[7px] pl-[7px]">
        <button aria-label="Timeline editor" className={`${dropdown} w-8`}>
          <Svg><circle cx="8" cy="8" r="7" fill="#eee" stroke="none" /><path d="M8.500 3v5L6 11" stroke="#222" strokeWidth="1.500" /></Svg>
          <Chevron />
        </button>
        <div className="ml-[5px] flex h-5 rounded border border-[#3d3d3d] bg-[#282828]">
          <button className="flex w-[70px] items-center justify-between border-r border-[#3d3d3d] pr-0.5 pl-1.5">Playback<Chevron /></button>
          <button className="flex w-[60px] items-center justify-between pr-px pl-[7px]">Keying<Chevron /></button>
        </div>
        <button className="ml-[9px] h-5">View</button>
        <button className="ml-[15px] h-5">Marker</button>

        <div className="ml-[436px] flex h-5 overflow-hidden rounded bg-[#2b2b2b]">
          <button aria-label="Auto keying" className={grayCell}>
            <Svg size={14} className="text-[#bbb]"><circle cx="8" cy="8" r="5.500" /></Svg>
          </button>
          <button aria-label="Auto keying options" className="flex w-5 items-center justify-center text-[#555]"><Chevron /></button>
        </div>
        <div className="ml-[7px] flex h-5 gap-px overflow-hidden rounded">
          {transport.map((t) => (
            <button key={t.name} aria-label={t.name} className="flex w-[19px] items-center justify-center bg-[#545454]">
              <Svg size={15}><path d={t.d} fill="#eee" stroke="none" /></Svg>
            </button>
          ))}
        </div>

        <input aria-label="Current frame" defaultValue="1" className="ml-auto h-5 w-[73px] rounded bg-[#545454] text-center outline-none" />
        <div className="ml-[7px] flex h-5 gap-px overflow-hidden rounded">
          <button aria-label="Use preview range" className="flex w-[18px] items-center justify-center bg-[#545454]">
            <Svg size={15}><circle cx="8" cy="9" r="5.500" strokeWidth="1.300" /><path d="M8 5.500V9h3M6 1.500h4M8 1.500v2M13 3l1.500 1.500" strokeWidth="1.300" /></Svg>
          </button>
          <label className="flex w-[88px] items-center bg-[#545454] pl-[15px]">
            Start
            <input defaultValue="1" className="w-0 flex-1 bg-transparent pr-[13px] text-right outline-none" />
          </label>
          <label className="flex w-[85px] items-center bg-[#545454] pl-[15px]">
            End
            <input defaultValue="250" className="w-0 flex-1 bg-transparent pr-[13px] text-right outline-none" />
          </label>
        </div>
      </div>

      <div className="relative flex-1 bg-[#1d1d1d]">
        <div className="flex h-[23px] items-center pt-0.5 pr-8 pl-[25px] text-[#989898]">
          {frames.map((f) => (
            <span key={f} className="flex-1 text-center">{f === 0 ? '' : f}</span>
          ))}
        </div>
        <svg className="block h-[25px] w-full bg-[#232323]" aria-hidden="true">
          <rect x={`${frameX(1)}%`} y="0" width={`${frameX(250) - frameX(1)}%`} height="25" fill="#303030" />
          {ticks.map((f) => (
            <line key={f} x1={`${frameX(f)}%`} x2={`${frameX(f)}%`} y1="0" y2="25" stroke={f % 10 === 0 ? '#161616' : '#262626'} />
          ))}
        </svg>
        <div className="absolute top-[37px] right-3 left-2 flex h-[7px] items-center justify-between rounded-full bg-[#545454]">
          <span className="h-1.5 w-1.5 rounded-full border border-[#6a6a6a] bg-[#2b2b2b]" />
          <span className="h-1.5 w-1.5 rounded-full border border-[#6a6a6a] bg-[#2b2b2b]" />
        </div>
        <div className="absolute top-[3px] left-[100px] flex w-6 flex-col items-center">
          <span className="flex h-[17px] w-full items-center justify-center rounded bg-[#4772b3] text-white">1</span>
          <svg width="10" height="28" aria-hidden="true">
            <path d="m5 8.500 4 4-4 4-4-4z" fill="#fff" stroke="#000" />
            <path d="M5 0v28" stroke="#4772b3" strokeWidth="2" />
          </svg>
        </div>
        <Svg size={8} box={8} className="absolute top-[18px] left-0"><path d="m0 1 3 3-3 3" stroke="#888" /></Svg>
        <Svg size={8} box={8} className="absolute top-[18px] right-0"><path d="M6.500 1 3.500 4l3 3" stroke="#888" /></Svg>
      </div>
    </section>
  );
}

/* ---------- outliner ---------- */

const objects = [
  'Cylinder', 'Cylinder.001', 'Cylinder.002', 'Cylinder.003', 'Cylinder.004', 'Cylinder.005',
  'Empty', 'interior', 'Plane', 'Plane.001', 'Plane.002',
];

function OutlinerRow({ name, selected, odd }: { name: string; selected: boolean; odd: boolean }) {
  const empty = name === 'Empty';
  return (
    <li className={`flex h-5 items-center pr-[11px] ${selected ? 'bg-[#334d80]' : odd ? 'bg-[#2b2b2b]' : 'bg-[#282828]'}`}>
      <span className="flex w-5 justify-center">
        {selected ? <EditVerts /> : !empty && <span className="h-1 w-1 rounded-full bg-white" />}
      </span>
      <span className="ml-[9px] h-5 w-px bg-[#5a5a5a]" />
      <button aria-label={`Expand ${name}`} className="ml-4 pt-0.5">
        <Svg size={10} box={10}><path d="m3 1 4 4-4 4" stroke="#bbb" /></Svg>
      </button>
      <span className={`ml-1 flex h-[18px] w-[19px] items-center justify-center rounded text-[#c9834a] ${selected ? 'bg-[#5d6f97]' : ''}`}>
        {empty ? (
          <Svg><path d="M1 1h14v14H1z" fill="currentColor" stroke="none" /><path d="m3 13 4-7 4 7z" fill="#282828" stroke="none" /><circle cx="12" cy="4" r="1.500" fill="#282828" stroke="none" /></Svg>
        ) : (
          <MeshObject />
        )}
      </span>
      <span className={`ml-[5px] pt-0.5 ${selected ? 'text-[#eba43c]' : 'text-[#c3c3c3]'}`}>{name}</span>
      <span className={`ml-[23px] flex h-[18px] w-[19px] items-center justify-center rounded ${selected ? 'border border-[#3b8b8b] bg-[#2c6a80]' : ''}`}>
        {empty ? (
          <Svg className="text-[#a94f56]"><path d="M1.500 1.500h13v13h-13z" /><path d="m2 14 4-7 4 7z" fill="currentColor" stroke="none" /><circle cx="11" cy="5" r="1.200" fill="currentColor" /></Svg>
        ) : (
          <MeshData className="text-[#0bb48a]" />
        )}
      </span>
      <span className="ml-auto flex gap-1.5"><Eye /><Camera /></span>
    </li>
  );
}

function Outliner() {
  return (
    <section className="h-[309px] shrink-0 overflow-hidden rounded-md bg-[#2b2b2b]">
      <div className="flex h-[26px] items-start bg-[#303030] pt-0.5 pr-1.5 pl-2">
        <button aria-label="Outliner editor" className={`${dropdown} w-[31px]`}>
          <Svg><path d="M2.500 2v11.500H7M2.500 8H7M1 2.500h4" strokeDasharray="2 1" /><path d="M8 6h6v3H8zM8 12h6v3H8z" fill="#fff" stroke="none" /></Svg>
          <Chevron />
        </button>
        <button aria-label="Display mode" className={`${dropdown} ml-1.5 w-8`}><ImageStack /><Chevron /></button>
        <label className="ml-[19px] flex h-5 w-[118px] items-center gap-1 rounded border border-[#3d3d3d] bg-[#1d1d1d] pl-1">
          <Magnifier />
          <input aria-label="Filter outliner" placeholder="Search" className="w-0 flex-1 bg-transparent pl-0.5 outline-none placeholder:text-[#666]" />
        </label>
        <button aria-label="Filter" className={`${dropdown} ml-auto w-[31px]`}>
          <Svg><path d="M1.500 1.500h13L10 8v6l-4-3V8z" /></Svg>
          <Chevron />
        </button>
        <button aria-label="New collection" className="ml-[5px] flex h-5 w-5 items-center justify-center rounded bg-[#545454]">
          <Svg className="text-[#aaa]"><path d="M1.500 3.500H8v4H1.500zM2.500 7.500v7h10V9M6 10.500h3" /><circle cx="12" cy="4" r="3.800" fill="#ddd" stroke="none" /><path d="M12 2v4M10 4h4" stroke="#222" /></Svg>
        </button>
      </div>
      <ul className="text-[#c3c3c3]">
        <li className="flex h-5 items-center bg-[#282828] pl-[22px]">
          <ArchiveBox className="text-[#ddd]" />
          <span className="ml-1.5 pt-0.5">Scene Collection</span>
        </li>
        <li className="flex h-5 items-center bg-[#2b2b2b] pr-[11px] pl-6">
          <button aria-label="Collapse Collection" className="pt-0.5"><Chevron className="text-[#999]" /></button>
          <span className="ml-1.5 flex h-[18px] w-5 items-center justify-center rounded border border-[#777] bg-[#4d4d4d]"><ArchiveBox className="text-white" /></span>
          <span className="ml-1 pt-0.5">Collection</span>
          <span className="ml-auto flex items-center gap-1.5">
            <span className="relative mr-0.5 flex">
              <input type="checkbox" defaultChecked aria-label="Exclude from view layer" className="h-2.5 w-2.5 appearance-none bg-[#e6e6e6]" />
              <Svg size={10} box={10} className="pointer-events-none absolute inset-0"><path d="m2 5 2.500 2.500L8 2" stroke="#222" strokeWidth="1.500" /></Svg>
            </span>
            <Eye />
            <Camera />
          </span>
        </li>
        {objects.map((name, i) => (
          <OutlinerRow key={name} name={name} selected={name === 'Plane.002'} odd={i % 2 === 1} />
        ))}
      </ul>
    </section>
  );
}

/* ---------- properties ---------- */

const objectBox = <><path d="M1.500 5V1.500H5M11 1.500h3.500V5M14.500 11v3.500H11M5 14.500H1.500V11" /><path d="M4 4h8v8H4z" fill="currentColor" stroke="none" /></>;

const propertyTabs = [
  [
    { name: 'Tool', color: 'text-[#b5b5b5]', icon: <><path d="M3.500 1v6" /><path d="M1.500 7h4v4q-2 6-4 0z" fill="currentColor" /><path d="M9 1v4l2 2v8h2V7l2-2V1" strokeWidth="1.800" /></> },
  ],
  [
    { name: 'Render', color: 'text-[#b5b5b5]', icon: <><path d="M1.500 4.500h9v10h-9zM3.500 4V2.500h5V4M11.500 3.500h3v11h-3zM11 8.500h3.500" /><path d="M3 7.500h6M3 9.500h6M3 11.500h6" /></> },
    { name: 'Output', color: 'text-[#b5b5b5]', icon: <><path d="M1 1h14v6H1z" fill="currentColor" stroke="none" /><path d="M3.500 5.500h9v9h-9z" fill="#1d1d1d" /><path d="m4 14 4-6 4 6z" fill="currentColor" stroke="none" /></> },
    { name: 'View Layer', color: 'text-[#b5b5b5]', icon: <><path d="M5.500 1.500h9v9h-9zM3.500 3.500v9h9M1.500 5.500v9h9" /><path d="M6.500 10 10 4l3.500 6z" fill="currentColor" stroke="none" /></> },
    { name: 'Scene', color: 'text-[#b5b5b5]', icon: <><path d="M5.500 1 9 8a4 4 0 0 0-2 6.500H3A2.500 2.500 0 0 1 1 12z" fill="currentColor" stroke="none" /><circle cx="11" cy="11" r="3.500" /><circle cx="13" cy="3.500" r="1.800" fill="currentColor" stroke="none" /></> },
    { name: 'World', color: 'text-[#b3545c]', icon: <><circle cx="8" cy="8" r="6.500" /><path d="M3 4q3-2 4 0t2 2-3 2-3-1zM9 9q3-1 4 1l-2 3-2-1zM11 2l2 4-2-1z" fill="currentColor" /><path d="m1 15 2-2M15 1l-2 2" /></> },
  ],
  [
    { name: 'Collection', color: 'text-[#d5d5d5]', icon: <path d="M1.500 1.500h13v4h-13zM2.500 5.500v9h11v-9M6 9h4" strokeWidth="1.300" /> },
  ],
  [
    { name: 'Object', color: 'text-[#c9834a]', icon: objectBox },
    { name: 'Modifiers', color: 'text-[#5680d8]', icon: <path d="M2.500 13.500 8 8q-1-5 3-6.500h2l-2 3 1 1.500 3-1.500q0 5-5 5.500l-5 5q-2 1-2.500-1.500z" fill="currentColor" stroke="none" /> },
    { name: 'Particles', color: 'text-[#4c6fb8]', icon: <><circle cx="3.500" cy="3.500" r="2.500" fill="#5680d8" stroke="none" /><path d="M6 3.500h6M3.500 6v6M5.500 5.500l7 7" /><path d="M12 2h3v3h-3zM2 12h3v3H2zM12 12h3v3h-3z" fill="currentColor" stroke="none" /></> },
    { name: 'Physics', color: 'text-[#4c6fb8]', icon: <><path d="M9.500 1.700A6.500 6.500 0 1 0 14.500 9" /><circle cx="8" cy="8.500" r="3" fill="#5680d8" stroke="none" /><circle cx="13.500" cy="3" r="1.800" fill="currentColor" stroke="none" /></> },
    { name: 'Constraints', color: 'text-[#5680d8]', icon: <><path d="M2 7.500 11 1.800q3-1 3.500 2L11 12" strokeWidth="1.300" /><circle cx="6.500" cy="10" r="5" strokeWidth="1.300" /><circle cx="6.500" cy="10" r="2" strokeWidth="1.500" /><circle cx="12.500" cy="3.500" r="1" /></> },
    { name: 'Data', color: 'text-[#00d6a3]', icon: <path d="M1.500 1.500h3v3h-3zM11.500 1.500h3v3h-3zM6.500 11.500h3v3h-3zM4.500 3h7M3.500 4.500l3.500 7M12.500 4.500 9 11.500" /> },
    { name: 'Material', color: 'text-[#b3545c]', icon: <><circle cx="8" cy="8" r="6.500" /><path d="M8 1v7H1a7 7 0 0 1 7-7zM8 8h6.500a7 7 0 0 1-4 6.500z" fill="currentColor" stroke="none" /></> },
  ],
  [
    { name: 'Texture', color: 'text-[#b3545c]', icon: <><path d="M1.500 1.500h13v13h-13z" /><path d="M2 2h3v3H2zM8 2h3v3H8zM5 5h3v3H5zM11 5h3v3h-3zM2 8h3v3H2zM8 8h3v3H8zM5 11h3v3H5zM11 11h3v3h-3z" fill="currentColor" stroke="none" /></> },
  ],
];

function ListBox({ canAdd }: { canAdd: boolean }) {
  return (
    <div className="flex gap-2.5 px-[9px]">
      <div className="flex h-[78px] flex-1 items-end rounded bg-[#2d2d2d] pb-[7px] pl-[11px]">
        <svg width="7" height="6" aria-hidden="true"><path d="M0 0v6l7-3z" fill="#ccc" /></svg>
        <span className="flex flex-1 justify-center"><Grip className="text-[#ddd]" /></span>
      </div>
      <div className="flex w-[18px] flex-col gap-px">
        <button aria-label="Add" className={`flex h-[18px] items-center justify-center rounded-t ${canAdd ? 'bg-[#545454] text-white' : 'bg-[#484848] text-[#7c7c7c]'}`}>
          <Svg size={9} box={9}><path d="M4.500 0v9M0 4.500h9" /></Svg>
        </button>
        <button aria-label="Remove" className="flex h-[19px] items-center justify-center rounded-b bg-[#484848] text-[#7c7c7c]">
          <Svg size={9} box={9}><path d="M0 4.500h9" /></Svg>
        </button>
        <button aria-label="Specials" className="mt-[7px] flex h-[18px] items-center justify-center rounded bg-[#282828]"><Chevron /></button>
      </div>
    </div>
  );
}

function Panel({ title, children }: { title: string; children?: ReactNode }) {
  return (
    <div className="rounded bg-[#3d3d3d]">
      <button className="flex h-[25px] w-full items-center pr-1.5 pl-2">
        <Svg size={10} box={10} className="mt-px text-[#a5a5a5]">
          <path d={children ? 'm1 3 4 4 4-4' : 'm3 1 4 4-4 4'} strokeWidth="1.300" />
        </Svg>
        <span className="ml-1 pt-0.5">{title}</span>
        <Grip className="ml-auto text-[#8a8a8a]" />
      </button>
      {children}
    </div>
  );
}

function Properties() {
  const [tab, setTab] = useState('Data');
  return (
    <section className="mt-1 flex min-h-0 flex-1 flex-col overflow-hidden rounded-md bg-[#303030]">
      <div className="flex h-[25px] shrink-0 items-start pt-0.5 pr-[7px] pl-2">
        <button aria-label="Properties editor" className={`${dropdown} w-8`}>
          <Svg><rect x="1" y="1" width="14" height="6" rx="3" fill="#eee" stroke="none" /><rect x="1" y="9" width="14" height="6" rx="3" fill="#eee" stroke="none" /><path d="M10 2.500h3v3h-3zM6 10.500h7v3H6z" fill="#282828" stroke="none" /></Svg>
          <Chevron />
        </button>
        <label className="ml-[68px] flex h-5 w-[118px] items-center gap-1 rounded border border-[#3d3d3d] bg-[#1d1d1d] pl-1">
          <Magnifier />
          <input aria-label="Search properties" placeholder="Search" className="w-0 flex-1 bg-transparent pl-0.5 outline-none placeholder:text-[#666]" />
        </label>
        <button aria-label="Options" className={`${dropdown} ml-auto w-5`}><Chevron /></button>
      </div>
      <div className="flex flex-1">
        <div className="flex w-7 flex-col gap-2 bg-[#1d1d1d] pt-2">
          {propertyTabs.map((group, g) => (
            <div key={g} className="-mb-px ml-0.5 flex flex-col border-b border-[#161616]">
              {group.map((t) => (
                <button
                  key={t.name}
                  aria-label={t.name}
                  onClick={() => setTab(t.name)}
                  className={`flex h-7 items-center justify-center rounded-l ${t.color} ${t.name === tab ? 'bg-[#303030]' : ''}`}
                >
                  <Svg>{t.icon}</Svg>
                </button>
              ))}
            </div>
          ))}
        </div>
        <div className="flex-1 pr-1.5 pl-2">
          <div className="flex h-9 items-center pr-0.5 pl-0.5">
            <Svg>{objectBox}</Svg>
            <span className="ml-[7px]">Plane.002</span>
            <Svg size={10} box={10} className="ml-4"><path d="m3 1 4 4-4 4" /></Svg>
            <MeshData className="ml-[7px]" />
            <span className="ml-2">Plane.002</span>
            <span className="ml-auto"><Pin /></span>
          </div>
          <div className="mt-2 flex h-5 overflow-hidden rounded border border-[#3d3d3d] bg-[#1d1d1d]">
            <button aria-label="Browse mesh data" className="flex w-[31px] items-center justify-center gap-px border-r border-[#3d3d3d] bg-[#282828]"><MeshData /><Chevron /></button>
            <input aria-label="Mesh name" defaultValue="Plane.002" className="w-0 flex-1 bg-transparent pl-[7px] outline-none" />
            <button aria-label="Fake user" className="flex w-[19px] items-center justify-center bg-[#545454] text-[#999]">
              <Svg><path d="m8 1.500 6 2q1 8-6 11-7-3-6-11z" /></Svg>
            </button>
          </div>
          <div className="mt-2.5 flex flex-col gap-0.5">
            <Panel title="Vertex Groups">
              <div className="pt-[9px] pb-[9px]"><ListBox canAdd /></div>
            </Panel>
            <Panel title="Shape Keys">
              <div className="pt-[9px] pb-3">
                <ListBox canAdd={false} />
                <label className="mt-2.5 flex h-3 items-center gap-1 pl-[9px]">
                  <input type="checkbox" className="h-3 w-3 appearance-none rounded-xs bg-[#545454]" />
                  Add Rest Position
                </label>
              </div>
            </Panel>
            {['UV Maps', 'Color Attributes', 'Attributes', 'Texture Space', 'Remesh', 'Geometry Data', 'Custom Properties'].map((p) => (
              <Panel key={p} title={p} />
            ))}
          </div>
        </div>
      </div>
    </section>
  );
}

/* ---------- status bar + taskbar ---------- */

function MouseHint({ label, fill, width }: { label: string; fill: string; width: string }) {
  return (
    <span className={`flex items-center gap-1 ${width}`}>
      <svg width="13" height="16" fill="none" stroke="#989898" aria-hidden="true">
        <rect x=".5" y=".5" width="12" height="15" rx="3" />
        <path d={fill} fill="#989898" stroke="none" />
      </svg>
      {label}
    </span>
  );
}

function StatusBar() {
  return (
    <footer className="flex h-5 shrink-0 items-center bg-[#181818] pr-[11px] pl-2.5 text-[#989898]">
      <MouseHint label="Change Frame" fill="M1 2h5v6H1z" width="w-[211px]" />
      <MouseHint label="Pan View" fill="M4 2h5v6H4z" width="w-[211px]" />
      <MouseHint label="Dope Sheet" fill="M7 2h5v6H7z" width="w-[200px]" />
      <span className="ml-auto flex items-center gap-2">
        <Svg><circle cx="8" cy="8" r="6.500" /><ellipse cx="8" cy="8" rx="3" ry="6.500" /><path d="M1.500 8h13M2 4.500h12M2 11.500h12" /><path d="m1 2 14 13" stroke="#181818" strokeWidth="3" /><path d="m1 2 14 13" /></Svg>
        <span className="flex items-center gap-1"><span className="h-3 w-px bg-[#777]" />4.2.2</span>
      </span>
    </footer>
  );
}

function Pumpkin() {
  return (
    <svg width="76" height="38" viewBox="0 0 76 38" aria-hidden="true">
      <path d="M48 0h28v30Q70 22 66 15T48 0z" fill="#c9b3e6" opacity=".45" />
      <path d="M76 0 52 2M76 0 58 13M76 0 67 20M76 0 74 29M56 0q0 6 4 5 0 6 6 6 0 7 9 8M64 0q1 4 4 3 0 5 8 6M49 0q2 7 8 8 1 9 8 10 2 8 11 9" fill="none" stroke="#8d6dbd" />
      <path d="m2 28 6-3-3-6 6 3 3-7 1 8 4 3-4 3 1 6-6-3-4 4 1-6z" fill="#f39a1d" />
      <path d="M37 12q-1-5-4-7l4-2q4 3 4 9z" fill="#5c8a3a" />
      <ellipse cx="36" cy="24" rx="17" ry="13.500" fill="#e8590c" />
      <ellipse cx="36" cy="24" rx="11" ry="13.500" fill="#f57c12" />
      <ellipse cx="36" cy="23" rx="5" ry="12.500" fill="#ff9a2e" />
      <path d="m28 21 3-4 3 4zM39 21l3-4 3 4zM26 25q10 4 21 0-2 10-10 10t-11-10z" fill="#5a1c05" />
      <path d="M31 27h3v2h-3zM39 27h3v2h-3zM35 32h3v3h-3z" fill="#ff9a2e" />
    </svg>
  );
}

const pinned = [
  {
    name: 'Microsoft Edge', width: 'w-[50px]', bar: '',
    icon: <><defs><linearGradient id="edge" x1="0" y1="0" x2="1" y2="0"><stop offset="0" stopColor="#2aa9e8" /><stop offset=".6" stopColor="#2bc3c8" /><stop offset="1" stopColor="#62e05c" /></linearGradient></defs><circle cx="12" cy="12" r="12" fill="#1173c8" stroke="none" /><path d="M0 12Q1 0 12 0t12 10q0 6-6 6.500-4 0-4-2.500 2-2 1-4-3-4-8-3-5 0-7 5z" fill="url(#edge)" stroke="none" /><path d="M10 9q-4 4-1 9 3 5 11 3 3-2 3-3-5 2-9-1-2-2 0-4-1-3-4-4z" fill="#0b4a92" stroke="none" /></>,
  },
  {
    name: 'Mail', width: 'w-[49px]', bar: '',
    icon: <><path d="m12 0 12 8v4H0V8z" fill="#0f5fa8" stroke="none" /><path d="M3 7h18v9H3z" fill="#e8f1fa" stroke="none" /><path d="M0 8v15h24V8l-12 9z" fill="#1f8fe0" stroke="none" /><path d="m0 23 12-10 12 10z" fill="#43b5f5" stroke="none" /></>,
  },
  {
    name: 'File Explorer', width: 'w-[49px]', bar: 'w-10',
    icon: <><path d="M1 3h9l2 2h11v16H1z" fill="#e0a52b" stroke="none" /><path d="M1 7h22v14H1z" fill="#fbd668" stroke="none" /><path d="M5 13h14v9h-4v-4H9v4H5z" fill="#3f9be0" stroke="none" /></>,
  },
  {
    name: 'Microsoft Store', width: 'w-[49px]', bar: '',
    icon: <><path d="M7 7V2h10v5" stroke="#1ba1e2" strokeWidth="2" /><rect x="1" y="6" width="22" height="18" rx="2" fill="#f3f3f3" stroke="none" /><path d="M7 10h4v4H7z" fill="#f25022" stroke="none" /><path d="M12 10h4v4h-4z" fill="#7fba00" stroke="none" /><path d="M7 15h4v4H7z" fill="#00a4ef" stroke="none" /><path d="M12 15h4v4h-4z" fill="#ffb900" stroke="none" /></>,
  },
  {
    name: 'Opera', width: 'w-[50px]', bar: 'w-10',
    icon: <><circle cx="12" cy="12" r="11" stroke="#e3163f" strokeWidth="1.600" /><ellipse cx="12" cy="12" rx="6" ry="10.500" stroke="#e3163f" strokeWidth="1.600" /><path d="M7 3q-5 9 0 18M17 3q5 9 0 18" stroke="#8c1230" /></>,
  },
];

function Taskbar() {
  return (
    <footer className="flex h-10 shrink-0 items-stretch bg-[#1e1e1e] pr-1 font-['Open_Sans',sans-serif] text-[13px] text-white">
      <button aria-label="Start" className="flex w-[46px] items-center justify-center pr-0.5">
        <svg width="16" height="16" aria-hidden="true"><path d="m0 2 7-1v6.500H0zM8 1l8-1v7.500H8zM0 8.500h7V15l-7-1zM8 8.500h8V16l-8-1z" fill="#fff" /></svg>
      </button>
      <label className="flex w-72 items-center border border-[#c9c9c9] bg-[#f2f2f2] pl-[11px] text-black">
        <Magnifier size={17} />
        <input aria-label="Search Windows" placeholder="Pesquisar" className="ml-2.5 w-0 flex-1 bg-transparent pt-0.5 text-[13px] outline-none placeholder:text-[#222]" />
        <Pumpkin />
      </label>
      <button aria-label="Task view" className="flex w-[49px] items-center justify-center">
        <Svg><path d="M.5 0v3.500h11V0M.5 16v-3.500h11V16M.5 5.500h11v5H.5zM14.500 0v3M14.500 8v8" /><path d="M13 4h3v3h-3z" fill="#fff" stroke="none" /></Svg>
      </button>
      {pinned.map((p) => (
        <button key={p.name} aria-label={p.name} className={`relative flex items-center justify-center ${p.width}`}>
          <Svg size={24} box={24}>{p.icon}</Svg>
          {p.bar && <span className={`absolute bottom-0 h-0.5 bg-[#76b9ed] ${p.bar}`} />}
        </button>
      ))}
      <button aria-label="Blender" className="flex w-12 items-center justify-center border-b-2 border-[#76b9ed] bg-[#4a4a4a]">
        <BlenderLogo size={24} />
      </button>

      <button className="ml-auto flex items-center">
        <svg width="28" height="26" aria-hidden="true">
          <path d="M6 24q-6-1-5-6 1-4 5-4 2-6 8-5 6 1 6 6 5 1 4 5-1 4-5 4z" fill="#a9c8f5" />
          <circle cx="19" cy="7" r="6.500" fill="#d32f21" />
          <text x="19" y="10" fontSize="9" textAnchor="middle" fill="#fff">1</text>
        </svg>
        <span className="ml-1">22°C</span>
        <span className="ml-2.5">Nublado</span>
      </button>
      <div className="ml-[25px] flex items-center gap-2">
        <Svg size={13} box={13}><path d="m1 9 5.500-5.500L12 9" strokeWidth="1.200" /></Svg>
        <Svg size={15}><path d="M3 5.500h7v6H3zM10 8l3-2v5l-3-2M4 3q4-3 8 0M4 14q4 3 8 0" strokeWidth="1.300" /></Svg>
        <Svg size={17}><path d="M4.500 3.500h11v8h-11M10 11.500v3M6 14.500h8M1 1.500h4v4H1zM3 5.500v9h2" /></Svg>
        <Svg size={17}><path d="M1 6h2l4-3.500v11L3 10H1zM9 6q1.500 2 0 4M11 4.500q3 3.500 0 7M13 3q4 5 0 10" /></Svg>
      </div>
      <div className="ml-2.5 flex flex-col justify-center text-center text-[11px] leading-[17px]"><span>POR</span><span>PTB</span></div>
      <div className="ml-3.5 flex flex-col justify-center text-center text-[11px] leading-[17px]"><span>20:20</span><span>11/10/2024</span></div>
      <button aria-label="Notifications" className="ml-[17px] flex w-9 items-center">
        <svg width="26" height="28" aria-hidden="true">
          <path d="M1 3h15v12H7l-3 3v-3H1z" fill="#fff" />
          <path d="M3.500 6.500h10M3.500 9.500h10M3.500 12.500h6" stroke="#1e1e1e" />
          <circle cx="16" cy="18" r="8" fill="#3a3a3a" stroke="#777" />
          <text x="16" y="22" fontSize="11" textAnchor="middle" fill="#fff">1</text>
        </svg>
      </button>
      <span className="w-px bg-[#777]" />
    </footer>
  );
}

export default function App() {
  return (
    <div className="flex h-screen flex-col overflow-hidden bg-[#181818] font-['Inter',sans-serif] text-[11px] text-[#e0e0e0]">
      <TitleBar />
      <MenuBar />
      <main className="flex min-h-0 flex-1">
        <div className="flex min-w-0 flex-1 flex-col">
          <Viewport />
          <Timeline />
        </div>
        <aside className="mr-0.5 ml-[3px] flex w-[330px] shrink-0 flex-col">
          <Outliner />
          <Properties />
        </aside>
      </main>
      <StatusBar />
      <Taskbar />
    </div>
  );
}
